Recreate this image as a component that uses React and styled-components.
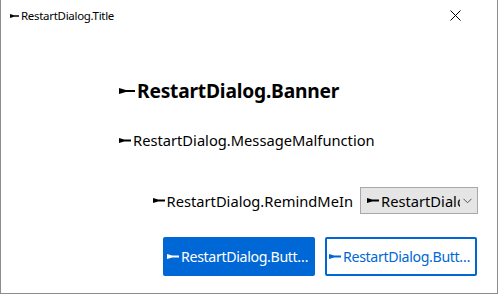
import React from "react";
import styled, { createGlobalStyle } from "styled-components";

const GlobalStyle = createGlobalStyle`
	html, body {
		margin: 0;
		padding: 0;
		background: #ffffff;
	}
	body {
		font-family: "Noto Sans", "Liberation Sans", sans-serif;
		color: #000000;
		overflow: hidden;
	}
`;

const Window = styled.div`
	width: 496px;
	height: 293px;
	border: 1px solid #8c8c8c;
	border-top: none;
	background: #ffffff;
	display: flex;
	flex-direction: column;
`;

const TitleBar = styled.div`
	height: 31px;
	display: flex;
	align-items: center;
	justify-content: space-between;
	padding-left: 9px;
`;

const Title = styled.span`
	display: flex;
	align-items: center;
	font-size: 11.5px;
	letter-spacing: -0.3px;
`;

const CloseButton = styled.div`
	width: 46px;
	height: 31px;
	margin-right: 19px;
	display: flex;
	align-items: center;
	justify-content: center;
`;

const Body = styled.div`
	display: flex;
	flex-direction: column;
	padding-left: 118px;
`;

const Banner = styled.div`
	display: flex;
	align-items: center;
	margin-top: 46px;
	font-size: 19.2px;
	font-weight: 700;
	letter-spacing: -0.2px;
`;

const Message = styled.div`
	display: flex;
	align-items: center;
	margin-top: 26px;
	font-size: 14.7px;
`;

const RemindRow = styled.div`
	display: flex;
	align-items: center;
	justify-content: flex-end;
	margin-top: 37px;
	padding-right: 19px;
	gap: 7px;
`;

const Label = styled.span`
	display: flex;
	align-items: center;
	font-size: 14.7px;
`;

const Combo = styled.div`
	width: 118px;
	height: 27px;
	border: 1px solid #a8a8a8;
	background: #e5e5e5;
	display: flex;
	align-items: center;
	padding-left: 6px;
	box-sizing: border-box;
	overflow: hidden;
	font-size: 14.7px;
`;

const ComboText = styled.span`
	display: flex;
	align-items: center;
	white-space: nowrap;
	width: 92.5px;
	overflow: hidden;
`;

const Chevron = styled.span`
	margin-left: auto;
	margin-right: 5px;
	display: flex;
`;

const ButtonRow = styled.div`
	display: flex;
	justify-content: flex-end;
	gap: 10px;
	margin-top: 23px;
	padding-right: 20px;
`;

const Button = styled.div`
	width: 152px;
	height: 39px;
	box-sizing: border-box;
	border-radius: 2px;
	display: flex;
	align-items: center;
	padding-left: 2px;
	font-size: 14.2px;
	letter-spacing: -0.35px;
	white-space: nowrap;
	overflow: hidden;
	background: ${(props) => (props.primary ? "#0067d6" : "#ffffff")};
	color: ${(props) => (props.primary ? "#ffffff" : "#0067d6")};
	border: 2px solid #0067d6;
`;

const Marker = ({ w = 11, h = 4, color = "currentColor" }) => (
	<svg
		width={w}
		height={h}
		viewBox="0 0 14 5"
		preserveAspectRatio="none"
		style={{ marginRight: 2, flexShrink: 0 }}
	>
		<polygon points="0,0 6,1.6 14,1.6 14,3.4 6,3.4 0,5" fill={color} />
	</svg>
);

const CloseIcon = () => (
	<svg width="11" height="11" viewBox="0 0 11 11">
		<path d="M0.5 0.5 L10.5 10.5 M10.5 0.5 L0.5 10.5" stroke="#000" strokeWidth="1" />
	</svg>
);

const ChevronIcon = () => (
	<svg width="9" height="6" viewBox="0 0 9 6">
		<path d="M0.5 0.8 L4.5 4.8 L8.5 0.8" stroke="#555" strokeWidth="1" fill="none" />
	</svg>
);

export default function App() {
	return (
		<>
			<GlobalStyle />
			<Window>
				<TitleBar>
					<Title>
						<Marker w={9} h={4} />
						RestartDialog.Title
					</Title>
					<CloseButton>
						<CloseIcon />
					</CloseButton>
				</TitleBar>
				<Body>
					<Banner>
						<Marker w={16} h={6} />
						RestartDialog.Banner
					</Banner>
					<Message>
						<Marker w={12} h={5} />
						RestartDialog.MessageMalfunction
					</Message>
				</Body>
				<RemindRow>
					<Label>
						<Marker w={12} h={5} />
						RestartDialog.RemindMeIn
					</Label>
					<Combo>
						<ComboText>
							<Marker w={12} h={5} />
							RestartDialog.RemindMeIn
						</ComboText>
						<Chevron>
							<ChevronIcon />
						</Chevron>
					</Combo>
				</RemindRow>
				<ButtonRow>
					<Button primary>
						<Marker w={12} h={5} />
						RestartDialog.Butt…
					</Button>
					<Button>
						<Marker w={12} h={5} />
						RestartDialog.Butt…
					</Button>
				</ButtonRow>
			</Window>
		</>
	);
}
